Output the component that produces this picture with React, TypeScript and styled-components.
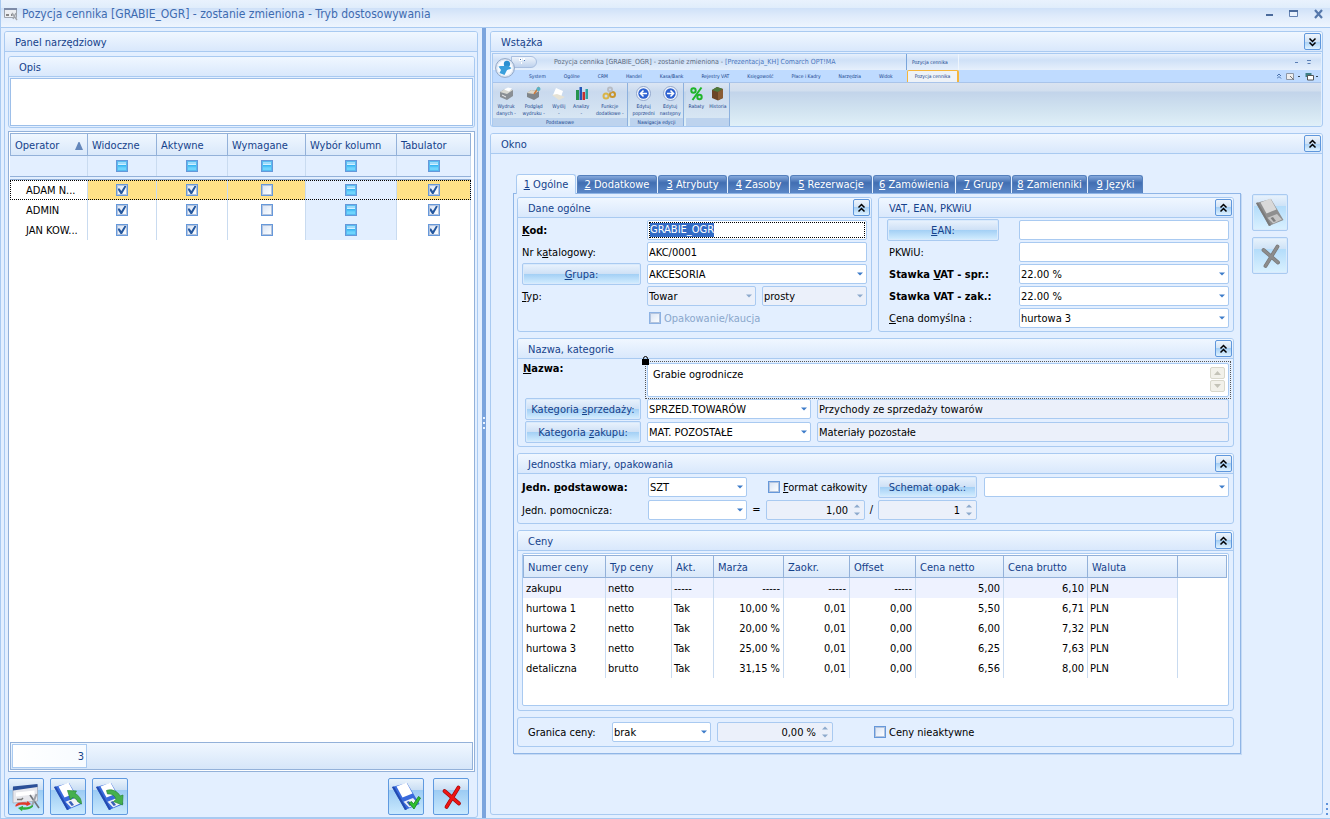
import React, { useEffect, useRef } from "react";
import styled, { createGlobalStyle, css } from "styled-components";

const c = {
  page: "#e3efff",
  line: "#a9caf1",
  gridLine: "#93b1d9",
  cellLine: "#c9dbf0",
  navy: "#15428b",
  readonly: "#ebf0fa",
  arrow: "#3d7cc9",
  arrowOff: "#8da9cc",
};

const Global = createGlobalStyle`
  * { box-sizing: border-box; }
  body { margin: 0; background: ${c.page}; }
  body, button, input, select, textarea {
    font-family: "DejaVu Sans Condensed", Tahoma, "DejaVu Sans", sans-serif;
    font-size: 11px;
    line-height: 14px;
    color: #000;
  }
  button, input, select, textarea { margin: 0; }
`;

/* ---------- window frame ---------- */

const Window = styled.div`
  display: flex;
  flex-direction: column;
  min-height: 100vh;
  border: solid ${c.line};
  border-width: 0 0 1px 1px;
`;

const TitleBar = styled.header`
  display: flex;
  align-items: center;
  height: 28px;
  padding: 0 7px 0 3px;
  border-bottom: 1px solid ${c.line};
  background: linear-gradient(#e9f2fd 0, #e0edfb 8px, #cfe1f8 8px, #dfebfb 16px, #eef5fe 27px);
`;

const Title = styled.h1`
  flex: 1;
  margin: 0 0 0 4px;
  font-size: 12px;
  line-height: 16px;
  font-weight: normal;
  color: #3e6bb0;
`;

const WindowButton = styled.button`
  display: flex;
  width: 25px;
  height: 16px;
  padding: 0;
  justify-content: flex-end;
  align-items: center;
  border: 0;
  background: none;
`;

const Columns = styled.main`
  display: grid;
  flex: 1;
  grid-template-columns: 474px 4px minmax(780px, 1fr);
  column-gap: 4px;
  padding: 0 7px 0 3px;
`;

const Splitter = styled.div`
  display: flex;
  align-items: center;
  justify-content: center;
  background: #7ba4dd;
`;

const Grip = styled.svg`
  width: 2px;
  height: 12px;
`;

const CornerGrip = styled.svg`
  position: absolute;
  right: 2px;
  bottom: 4px;
  width: 2px;
  height: 12px;
`;

const LeftPane = styled.div`
  display: flex;
  padding-top: 3px;
`;

const RightPane = styled.div`
  display: flex;
  flex-direction: column;
  gap: 6px;
  padding: 3px 0;
`;

/* ---------- group boxes ---------- */

const GroupBox = styled.section<{ $grow?: boolean }>`
  display: flex;
  flex-direction: column;
  min-width: 0;
  border: 1px solid ${c.line};
  border-radius: 3px;
  ${(p) => p.$grow && "flex: 1;"}
`;

const GroupHead = styled.div`
  display: flex;
  align-items: center;
  justify-content: space-between;
  height: 20px;
  padding: 0 1px 0 10px;
  border-bottom: 1px solid ${c.line};
  border-radius: 2px 2px 0 0;
  background: linear-gradient(#f0f7ff, #d9e8fc);
`;

const GroupTitle = styled.h2`
  margin: 0;
  padding-top: 2px;
  font-size: 11px;
  line-height: 14px;
  font-weight: normal;
  color: ${c.navy};
`;

const CollapseButton = styled.button`
  display: flex;
  width: 17px;
  height: 17px;
  padding: 0;
  align-items: center;
  justify-content: center;
  border: 1px solid #5f97dc;
  border-radius: 2px;
  background: linear-gradient(#eef5fc, #d0e2f5 50%, #a6cff4 50%, #dff2ff);
`;

function Group(props: { title: string; toggle?: "up" | "down"; grow?: boolean; children: React.ReactNode }) {
  return (
    <GroupBox $grow={props.grow}>
      <GroupHead>
        <GroupTitle>{props.title}</GroupTitle>
        {props.toggle && (
          <CollapseButton aria-label={(props.toggle === "up" ? "Zwiń " : "Rozwiń ") + props.title}>
            <svg width="9" height="10" viewBox="0 0 9 10" fill="none" stroke="#000" strokeWidth="1.5">
              {props.toggle === "up" ? (
                <path d="M1.500 4.500 4.500 1.500 7.500 4.500M1.500 8.500 4.500 5.500 7.500 8.500" />
              ) : (
                <path d="M1.500 1.500 4.500 4.500 7.500 1.500M1.500 5.500 4.500 8.500 7.500 5.500" />
              )}
            </svg>
          </CollapseButton>
        )}
      </GroupHead>
      {props.children}
    </GroupBox>
  );
}

/* ---------- form controls ---------- */

const Label = styled.label<{ $bold?: boolean; $inset?: boolean }>`
  height: 20px;
  padding-top: 1px;
  padding-left: ${(p) => (p.$inset ? 2 : 0)}px;
  line-height: 20px;
  white-space: nowrap;
  font-weight: ${(p) => (p.$bold ? "bold" : "normal")};
`;

const fieldBox = css`
  width: 100%;
  min-width: 0;
  height: 20px;
  border: 1px solid ${c.line};
  border-radius: 2px;
  outline: 0;
  color: #000;
`;

const TextInput = styled.input`
  ${fieldBox}
  padding: 0 1px;
  background: ${(p) => (p.readOnly ? c.readonly : "#fff")};
`;

const CodeFrame = styled.div`
  display: flex;
  height: 20px;
  padding: 1px;
  border: 1px solid ${c.line};
  border-radius: 2px;
  background: #fff;
`;

const CodeInput = styled.input`
  width: 100%;
  padding: 0;
  border: 1px dotted #000;
  outline: 0;
  background: #fff;
  &::selection {
    background: #316ac5;
    color: #fff;
  }
`;

const SelectWrap = styled.div`
  position: relative;
  display: flex;
  min-width: 0;
`;

const SelectBox = styled.select`
  ${fieldBox}
  appearance: none;
  padding: 1px 16px 0 1px;
  background: #fff;
  &:disabled {
    background: ${c.readonly};
    opacity: 1;
  }
`;

const SelectArrow = styled.svg`
  position: absolute;
  top: 8px;
  right: 4px;
  pointer-events: none;
`;

function Select(props: { id?: string; label?: string; value?: string; disabled?: boolean }) {
  return (
    <SelectWrap>
      <SelectBox id={props.id} aria-label={props.label} disabled={props.disabled}>
        <option>{props.value}</option>
      </SelectBox>
      <SelectArrow width="6" height="4" viewBox="0 0 6 4">
        <path d="M0 0.5H6L3 3.5Z" fill={props.disabled ? c.arrowOff : c.arrow} />
      </SelectArrow>
    </SelectWrap>
  );
}

const SpinWrap = styled.div`
  display: flex;
  min-width: 0;
  height: 20px;
  padding-right: 4px;
  align-items: center;
  border: 1px solid ${c.line};
  border-radius: 2px;
  background: ${c.readonly};
`;

const SpinInput = styled.input`
  flex: 1;
  min-width: 0;
  padding: 1px 0 0;
  border: 0;
  outline: 0;
  text-align: right;
  background: none;
`;

const SpinButtons = styled.div`
  display: flex;
  flex-direction: column;
  margin-left: 6px;
`;

const SpinButton = styled.button`
  display: flex;
  width: 6px;
  height: 8px;
  padding: 0;
  align-items: center;
  border: 0;
  background: none;
`;

function Spinner(props: { label: string; value: string }) {
  return (
    <SpinWrap>
      <SpinInput aria-label={props.label} defaultValue={props.value} readOnly />
      <SpinButtons>
        <SpinButton aria-label="Zwiększ">
          <svg width="6" height="4" viewBox="0 0 6 4">
            <path d="M0 3.5H6L3 0.5Z" fill="#8da9cc" />
          </svg>
        </SpinButton>
        <SpinButton aria-label="Zmniejsz">
          <svg width="6" height="4" viewBox="0 0 6 4">
            <path d="M0 0.5H6L3 3.5Z" fill="#8da9cc" />
          </svg>
        </SpinButton>
      </SpinButtons>
    </SpinWrap>
  );
}

const CheckBox = styled.input`
  appearance: none;
  display: grid;
  place-items: center;
  flex: none;
  width: 12px;
  height: 12px;
  border: 1px solid #6698da;
  background: #fff;
  &:disabled {
    border-color: #8db2e3;
  }
  &::before {
    content: "";
    grid-area: 1 / 1;
    width: 8px;
    height: 8px;
    border: 1px solid #b3c4de;
    background: linear-gradient(135deg, #dbe5f5, #fbfdff);
  }
  &:indeterminate::before {
    border-color: #58bcf0;
    background: linear-gradient(#9fdcfb 2px, #d5f1ff 2px, #d5f1ff 3px, #2fb0f2 3px, #6fd4fd 6px);
  }
  &:checked::after {
    content: "";
    grid-area: 1 / 1;
    width: 8px;
    height: 8px;
    background: #25589f;
    clip-path: polygon(0 30%, 20% 30%, 42% 62%, 80% 0, 100% 0, 100% 14%, 50% 100%, 32% 100%, 0 50%);
  }
`;

function Check(props: { id?: string; label?: string; state?: "on" | "off" | "mixed"; disabled?: boolean }) {
  const ref = useRef<HTMLInputElement>(null);
  useEffect(() => {
    if (ref.current) ref.current.indeterminate = props.state === "mixed";
  }, [props.state]);
  return (
    <CheckBox
      ref={ref}
      type="checkbox"
      id={props.id}
      aria-label={props.label}
      defaultChecked={props.state === "on"}
      disabled={props.disabled}
    />
  );
}

const CheckLine = styled.label<{ $muted?: boolean }>`
  display: flex;
  gap: 3px;
  height: 20px;
  padding-left: 2px;
  align-items: center;
  white-space: nowrap;
  color: ${(p) => (p.$muted ? "#8aa7cc" : "#000")};
`;

const CheckText = styled.span`
  padding-top: 1px;
`;

const PushButton = styled.button`
  height: 22px;
  margin: -1px 0;
  padding: 1px 2px 0;
  border: 1px solid ${c.line};
  border-radius: 2px;
  box-shadow: inset 0 0 0 1px #d9eafc;
  color: ${c.navy};
  white-space: nowrap;
  background: linear-gradient(#eaf3fd, #cfe1f6 48%, #a2cff5 50%, #d5eeff);
`;

/* ---------- tool panel ---------- */

const PanelBody = styled.div`
  display: flex;
  flex: 1;
  flex-direction: column;
  gap: 3px;
  padding: 4px 2px 2px 3px;
`;

const NoteArea = styled.textarea`
  display: block;
  height: 48px;
  margin: 1px;
  border: 1px solid #9dbfe9;
  outline: 0;
  resize: none;
  background: #fff;
`;

const OperatorGrid = styled.div`
  display: flex;
  flex: 1;
  flex-direction: column;
  justify-content: space-between;
  padding: 1px;
  border: 1px solid ${c.gridLine};
  background: #fff;
`;

const OperatorTable = styled.table`
  width: 461px;
  table-layout: fixed;
  border-spacing: 0;
`;

const HeadCell = styled.th`
  height: 23px;
  padding: 2px 4px 0;
  border: solid ${c.gridLine};
  border-width: 1px 1px 1px 0;
  text-align: left;
  font-weight: normal;
  white-space: nowrap;
  color: ${c.navy};
  background: linear-gradient(#f0f7ff, #d9e8fa);
  &:first-child {
    border-left-width: 1px;
  }
`;

const SortedHead = styled.span`
  display: flex;
  align-items: center;
  justify-content: space-between;
`;

const FilterCell = styled.td`
  height: 20px;
  padding: 0;
  border-right: 1px solid ${c.cellLine};
  background: ${c.page};
`;

const FilterEdge = styled.td`
  height: 4px;
  padding: 0;
  border: solid ${c.gridLine};
  border-width: 1px 0;
  background: ${c.page};
`;

const OperatorRow = styled.tr<{ $active?: boolean }>`
  ${(p) => p.$active && "outline: 1px dotted #000; outline-offset: -1px;"}
`;

const FlagCell = styled.td<{ $tone: "white" | "yellow" | "blue" }>`
  height: 20px;
  padding: 0;
  border-right: 1px solid ${c.cellLine};
  background: ${(p) => ({ white: "#fff", yellow: "#ffe187", blue: c.page })[p.$tone]};
`;

const NameCell = styled.td`
  height: 20px;
  padding: 1px 2px 0 16px;
  white-space: nowrap;
  border-right: 1px solid ${c.cellLine};
`;

const CenterCheck = styled.div`
  display: flex;
  justify-content: center;
`;

const GridFooter = styled.div`
  display: flex;
  height: 28px;
  padding: 1px;
  border: 1px solid ${c.gridLine};
  background: linear-gradient(#f0f7ff, #d6e6f9);
`;

const FooterCount = styled.output`
  width: 75px;
  padding: 0 2px;
  border: 1px solid ${c.line};
  line-height: 24px;
  text-align: right;
  color: ${c.navy};
  background: linear-gradient(90deg, #fff, #f7fbff);
`;

const ActionBar = styled.div`
  display: flex;
  gap: 6px;
  padding: 3px 6px 0 0;
`;

const IconButton = styled.button<{ $off?: boolean }>`
  display: flex;
  width: 36px;
  height: 37px;
  padding: 0;
  align-items: center;
  justify-content: center;
  border: 1px solid ${(p) => (p.$off ? c.line : "#5f9ae0")};
  border-radius: 2px;
  background: linear-gradient(#e9f3fc, #cbdff4 30%, #9ccbf3 31%, #c9e9fe);
  ${(p) => p.$off && "box-shadow: inset 0 0 0 1px #d9eafc; background: linear-gradient(#e9f3fc, #cfe3f7 30%, #b3dcfa 31%, #daf1ff);"}
`;

const Apart = styled.div`
  display: flex;
  gap: 9px;
  margin-left: auto;
`;

type FloppyMark = "out" | "in" | "ok" | "none";

function Floppy({ mark }: { mark: FloppyMark }) {
  const off = mark === "none";
  return (
    <svg width="30" height="31" viewBox="0 0 30 31">
      <path d="M1 6 L16 2 L28.500 23 L14 29 Z" fill={off ? "#8f8f8f" : "#3a6bdc"} />
      <path d="M1 6 L3 5.500 L16 28.200 L14 29 Z" fill={off ? "#7a7a7a" : "#234bb0"} />
      <path d="M5.500 5.600 L15.500 1.500 L21.500 12.500 L11.500 16.500 Z" fill={off ? "#d9d9d9" : "#fff"} />
      <path d="M12.500 20.800 L22 17 L27 22.600 L18.200 26.600 Z" fill={off ? "#c6c6c6" : "#f0f2f7"} />
      <path d="M15.500 21 L18 20 L21 24 L18.700 25 Z" fill={off ? "#808080" : "#3a5fb8"} />
      {mark === "out" && (
        <path d="M14.500 9.500 L23.500 10 L22 12.500 C26 14.500 28.500 18 28.500 23 L24.500 20.500 C24 18.500 22 17 19.500 16.500 L17.500 19 Z" fill="#45b04d" stroke="#2b8a37" strokeWidth=".7" />
      )}
      {mark === "in" && (
        <path d="M11.500 9.500 C17 7.500 23 10.500 25 15 L28 14 L27.500 24 L18.500 20.500 L21 18.500 C20 14.500 17 12.500 12.500 13 Z" fill="#45b04d" stroke="#2b8a37" strokeWidth=".7" />
      )}
      {mark === "ok" && (
        <path d="M18 22 L20.500 20.500 L22.500 23 L27.500 15.500 L29.500 17 L23 28 Z" fill="#2fc02f" stroke="#15801c" strokeWidth=".8" />
      )}
    </svg>
  );
}

function Cross({ off }: { off?: boolean }) {
  return (
    <svg width="26" height="28" viewBox="0 0 26 28" fill="none" strokeLinecap="round">
      <path d="M6.500 8 L21 20.500 M20.500 4.500 L8.500 24" stroke={off ? "#777" : "#a00808"} strokeWidth="3.800" />
      <path d="M6.500 8 L21 20.500 M20.500 4.500 L8.500 24" stroke={off ? "#8c8c8c" : "#ee1515"} strokeWidth="2.400" />
    </svg>
  );
}

function FormSwapIcon() {
  return (
    <svg width="28" height="30" viewBox="0 0 28 30">
      <path d="M1 5.500 L25.500 3 V19 L1 21 Z" fill="#e6e7ec" stroke="#a3a8b2" strokeWidth=".7" />
      <path d="M1 4.500 L25.500 2 V5 L1 8.500 Z" fill="#2b5098" />
      <path d="M4 10.500 L22.500 8.500 V12.500 L4 14.500 Z" fill="#fff" />
      <path d="M5 17.500h4M11 16l-2 2" stroke="#777" strokeWidth="1.500" />
      <path d="M18 13 L27 26" stroke="#6f7379" strokeWidth="1.600" />
      <path d="M24.500 12 L19.500 25" stroke="#9da1a8" strokeWidth="2" />
      <path d="M3.500 23 C5.500 20 10 20 15 20.500 L15.500 19 L19 22 L14.500 24.200 V23 C10 22.300 7 22.500 3.500 24.800 Z" fill="#e23a2a" />
      <path d="M21 24.500 C18.500 28 12.500 28 10.500 27.500 L10 29.200 L6 26 L11 23.800 V25.200 C15 25.500 18 24.800 21 23 Z" fill="#2fae3a" />
    </svg>
  );
}

function AppIcon() {
  return (
    <svg width="14" height="14" viewBox="0 0 14 14">
      <path d="M.5 1.500H12.500V10.500H.5Z" fill="#eceef2" stroke="#9da3ad" />
      <path d="M0 1H13V3H0Z" fill="#7d8ba8" />
      <path d="M2 8h3M7 8h1.500" stroke="#666" strokeWidth="1.300" />
      <path d="M8 6l5 7M12 6l-3 6" stroke="#a3a6ac" strokeWidth="1.400" />
    </svg>
  );
}

/* ---------- operator table data ---------- */

type Flag = "on" | "off" | "mixed";
const flagColumns = ["Widoczne", "Aktywne", "Wymagane", "Wybór kolumn", "Tabulator"];
const operatorWidths = [78, 69, 71, 78, 91, 74];
const operators: { name: string; flags: Flag[] }[] = [
  { name: "ADAM N...", flags: ["on", "on", "off", "mixed", "on"] },
  { name: "ADMIN", flags: ["on", "on", "off", "mixed", "on"] },
  { name: "JAN KOW...", flags: ["on", "on", "off", "mixed", "on"] },
];

function ToolPanel() {
  return (
    <Group title="Panel narzędziowy" grow>
      <PanelBody>
        <Group title="Opis">
          <NoteArea aria-label="Opis" />
        </Group>
        <OperatorGrid>
          <OperatorTable>
            <colgroup>
              {operatorWidths.map((w, i) => (
                <col key={i} width={w} />
              ))}
            </colgroup>
            <thead>
              <tr>
                <HeadCell>
                  <SortedHead>
                    Operator
                    <svg width="8" height="8" viewBox="0 0 8 8">
                      <path d="M0 8H8L4.500 0H3.500Z" fill="#6487bb" />
                    </svg>
                  </SortedHead>
                </HeadCell>
                {flagColumns.map((f) => (
                  <HeadCell key={f}>{f}</HeadCell>
                ))}
              </tr>
            </thead>
            <tbody>
              <tr>
                <FilterCell />
                {flagColumns.map((f) => (
                  <FilterCell key={f}>
                    <CenterCheck>
                      <Check label={"Filtr: " + f} state="mixed" />
                    </CenterCheck>
                  </FilterCell>
                ))}
              </tr>
              <tr>
                <FilterEdge colSpan={6} />
              </tr>
              {operators.map((o, r) => (
                <OperatorRow key={o.name} $active={r === 0}>
                  <NameCell>{o.name}</NameCell>
                  {o.flags.map((state, i) => (
                    <FlagCell key={i} $tone={i === 3 ? "blue" : r === 0 ? "yellow" : "white"}>
                      <CenterCheck>
                        <Check label={o.name + ": " + flagColumns[i]} state={state} />
                      </CenterCheck>
                    </FlagCell>
                  ))}
                </OperatorRow>
              ))}
            </tbody>
          </OperatorTable>
          <GridFooter>
            <FooterCount>3</FooterCount>
          </GridFooter>
        </OperatorGrid>
        <ActionBar>
          <IconButton aria-label="Przywróć układ">
            <FormSwapIcon />
          </IconButton>
          <IconButton aria-label="Eksportuj">
            <Floppy mark="out" />
          </IconButton>
          <IconButton aria-label="Importuj">
            <Floppy mark="in" />
          </IconButton>
          <Apart>
            <IconButton aria-label="Zapisz">
              <Floppy mark="ok" />
            </IconButton>
            <IconButton aria-label="Anuluj">
              <Cross />
            </IconButton>
          </Apart>
        </ActionBar>
      </PanelBody>
    </Group>
  );
}

/* ---------- ribbon thumbnail ---------- */

const Ribbon = styled.div`
  position: relative;
  margin: 1px 1px 0;
  border: solid ${c.line};
  border-width: 1px 0 0 1px;
  color: ${c.navy};
  font-size: 7px;
  line-height: 8px;
  white-space: nowrap;
`;

const RibbonTitle = styled.div`
  display: grid;
  grid-template-columns: 413px 53px 1fr;
  height: 16px;
  align-items: center;
  background: linear-gradient(#e6f0fc, #cfe1f7 6px, #e6f0fc);
`;

const RibbonCaption = styled.span`
  padding-left: 61px;
  color: #5d6b80;
  em {
    font-style: normal;
    color: #4a76bd;
  }
`;

const ContextCaption = styled.span`
  padding-left: 5px;
  font-size: 5px;
  line-height: 16px;
  border-left: 1px solid #7aa5db;
  border-right: 1px solid #eef5fd;
`;

const RibbonWindow = styled.span`
  display: flex;
  padding-right: 6px;
  justify-content: flex-end;
`;

const QuickAccess = styled.span`
  position: absolute;
  top: 2px;
  left: 18px;
  width: 26px;
  height: 12px;
  border: 1px solid #a9bfe0;
  border-radius: 0 6px 6px 0;
  background: linear-gradient(#eef4fc, #bfd2ed);
`;

const QuickIcon = styled.svg`
  display: block;
  margin: 1px 0 0 5px;
`;

const Orb = styled.svg`
  position: absolute;
  top: 4px;
  left: 2px;
`;

const RibbonTabs = styled.nav`
  display: flex;
  height: 13px;
  padding-left: 36px;
  gap: 18px;
  align-items: center;
  border-bottom: 1px solid #a9c4ea;
  background: #bfdbff;
`;

const RibbonTab = styled.a`
  font-size: 5px;
  color: ${c.navy};
  text-decoration: none;
`;

const ContextSlot = styled.div`
  position: absolute;
  top: 16px;
  left: 414px;
`;

const ContextTab = styled(RibbonTab)`
  display: block;
  width: 52px;
  height: 12px;
  line-height: 11px;
  text-align: center;
  border: solid #f5b63c;
  border-width: 1px 2px 0 1px;
  border-radius: 2px 2px 0 0;
  background: #eef2f7;
`;

const RibbonTools = styled.span`
  display: flex;
  margin-left: auto;
  padding-right: 2px;
  align-items: center;
`;

const RibbonBand = styled.div`
  display: flex;
  gap: 2px;
  height: 43px;
  background: linear-gradient(#dae3f0, #d1deee 8px, #c2d4ea 9px, #d0e2f0 26px, #e0f0f8);
`;

const RibbonGroup = styled.div<{ $width: number }>`
  display: flex;
  flex-direction: column;
  width: ${(p) => p.$width}px;
  justify-content: space-between;
  border-right: 1px solid #8db1de;
  text-align: center;
  background: linear-gradient(#dce6f3, #c9d9ee 9px, #dceaf5);
`;

const RibbonButtons = styled.div`
  display: flex;
  justify-content: space-around;
  padding: 3px 0 0;
`;

const RibbonButton = styled.button`
  display: flex;
  flex-direction: column;
  padding: 0;
  align-items: center;
  border: 0;
  background: none;
  font-size: 5px;
  line-height: 7px;
  color: ${c.navy};
`;

const RibbonIcon = styled.svg`
  width: 15px;
  height: 15px;
  margin-bottom: 2px;
`;

const RibbonGroupName = styled.span`
  height: 8px;
  font-size: 5px;
  line-height: 8px;
  background: #bdd3ee;
`;

const ribbonIcons: Record<string, React.ReactNode> = {
  print: (
    <>
      <path d="M1 6 6 3l8 1v6l-6 4-7-3z" fill="#8a8f94" />
      <path d="M1 6 6 3l8 1-6 4z" fill="#d9d9d2" />
      <path d="M5 3.500 9 1.500l4 1-3 3z" fill="#fff" />
      <path d="m3 9 4 2" stroke="#eee" />
    </>
  ),
  preview: (
    <>
      <path d="M1 7 5 4l8 1v6l-5 3-7-3z" fill="#7f858a" />
      <path d="M1 7 5 4l8 1-5 3z" fill="#ddd9cc" />
      <path d="m13 1-5 7" stroke="#c9793a" strokeWidth="1.500" />
      <circle cx="12.500" cy="3" r="2" fill="#59b3c8" />
    </>
  ),
  mail: (
    <>
      <path d="m5 2 7 3-2 6-8-2z" fill="#fff" />
      <path d="m1 9 5-1 8 3-6 3z" fill="#e6e2d4" />
    </>
  ),
  chart: (
    <>
      <path d="M2 4h3v10H2z" fill="#26944e" />
      <path d="M5.500 1H8v13H5.500z" fill="#2456b8" />
      <path d="M8.500 6H11v8H8.500z" fill="#c83030" />
      <path d="M11.500 3H14v10h-2.500z" fill="#2fa4a0" />
    </>
  ),
  gears: (
    <g fill="none" strokeWidth="2">
      <circle cx="4" cy="10" r="2.500" stroke="#d9b54a" />
      <circle cx="10.500" cy="8.500" r="2.500" stroke="#c9952c" />
      <circle cx="8" cy="3.500" r="2" stroke="#b7bcc4" />
    </g>
  ),
  back: (
    <>
      <circle cx="7.500" cy="7.500" r="7" fill="#f4f7fc" stroke="#8fa5cb" />
      <circle cx="7.500" cy="7.500" r="5.200" fill="#2f62d0" />
      <path d="M11 7.500H5M7.500 4.500l-3 3 3 3" stroke="#fff" strokeWidth="1.600" fill="none" />
    </>
  ),
  next: (
    <>
      <circle cx="7.500" cy="7.500" r="7" fill="#f4f7fc" stroke="#8fa5cb" />
      <circle cx="7.500" cy="7.500" r="5.200" fill="#2f62d0" />
      <path d="M4 7.500h6M7.500 4.500l3 3-3 3" stroke="#fff" strokeWidth="1.600" fill="none" />
    </>
  ),
  percent: (
    <g fill="none" stroke="#1fb52a" strokeWidth="2">
      <circle cx="4.500" cy="4.500" r="2.200" />
      <circle cx="10.500" cy="11" r="2.200" />
      <path d="m12.500 1.500-9 12.500" />
    </g>
  ),
  box: (
    <>
      <path d="m2 4 5-3 6 2v9l-5 2.500L2 12z" fill="#6b4526" />
      <path d="m2 4 5-3 6 2-5 3z" fill="#4e7a3c" />
      <path d="M8 6v8l5-2V3z" fill="#8a5c35" />
    </>
  ),
};

const ribbonGroups = [
  {
    name: "Podstawowe",
    width: 135,
    items: [
      ["print", "Wydruk", "danych -"],
      ["preview", "Podgląd", "wydruku -"],
      ["mail", "Wyślij", "-"],
      ["chart", "Analizy", "-"],
      ["gears", "Funkcje", "dodatkowe -"],
    ],
  },
  {
    name: "Nawigacja edycji",
    width: 54,
    items: [
      ["back", "Edytuj", "poprzedni"],
      ["next", "Edytuj", "następny"],
    ],
  },
  {
    name: "",
    width: 44,
    items: [
      ["percent", "Rabaty", ""],
      ["box", "Historia", ""],
    ],
  },
];

const ribbonTabs = ["System", "Ogólne", "CRM", "Handel", "Kasa/Bank", "Rejestry VAT", "Księgowość", "Płace i Kadry", "Narzędzia", "Widok"];

function RibbonPreview() {
  return (
    <Ribbon>
      <RibbonTitle>
        <RibbonCaption>
          Pozycja cennika [GRABIE_OGR] - zostanie zmieniona - <em>[Prezentacja_KH] Comarch OPT!MA</em>
        </RibbonCaption>
        <ContextCaption>Pozycja cennika</ContextCaption>
        <RibbonWindow>
          <svg width="20" height="6" viewBox="0 0 20 6" fill="none" stroke="#5a7eb4">
            <path d="M0 3.500h3M12 1.500h4M12.500 4.500h3" />
          </svg>
        </RibbonWindow>
      </RibbonTitle>
      <RibbonTabs>
        {ribbonTabs.map((t) => (
          <RibbonTab key={t} href="#">
            {t}
          </RibbonTab>
        ))}
        <RibbonTools>
          <svg width="42" height="9" viewBox="0 0 42 9" fill="none">
            <path d="m0 4 2-2 2 2M0 6.500l2-2 2 2" stroke="#4a72ad" />
            <path d="M9.500 1.500h7v6h-7z" fill="#eee" stroke="#8d97a6" />
            <path d="m13 4 4 4" stroke="#777" />
            <path d="M21 4.500h2M39 4.500h2" stroke="#345" />
            <path d="M28.500 1h6v4h-6z" fill="#3f7f86" />
            <path d="M30.500 3.500h6v4.500h-6z" fill="#fff" stroke="#555" />
          </svg>
        </RibbonTools>
      </RibbonTabs>
      <RibbonBand>
        {ribbonGroups.map((g, i) => (
          <RibbonGroup key={i} $width={g.width}>
            <RibbonButtons>
              {g.items.map(([icon, a, b]) => (
                <RibbonButton key={a + b}>
                  <RibbonIcon viewBox="0 0 15 15">{ribbonIcons[icon]}</RibbonIcon>
                  <span>{a}</span>
                  <span>{b}</span>
                </RibbonButton>
              ))}
            </RibbonButtons>
            <RibbonGroupName>{g.name}</RibbonGroupName>
          </RibbonGroup>
        ))}
      </RibbonBand>
      <QuickAccess>
        <QuickIcon width="10" height="8" viewBox="0 0 10 8">
          <path d="M2 0h3v3H2zM4 4h1v2H4zM6 0h2v2H6z" fill="#fff" />
          <path d="M3 1h1v1H3zM7 2h1v1H7z" fill="#4a72ad" />
        </QuickIcon>
      </QuickAccess>
      <Orb width="20" height="20" viewBox="0 0 20 20">
        <circle cx="10" cy="10" r="9.400" fill="#dfe8f4" stroke="#8ea5c6" />
        <circle cx="10" cy="10" r="7.500" fill="#f8fbff" />
        <circle cx="12" cy="6" r="3.200" fill="#2b8fd0" />
        <path d="M3.500 8.500c3-1 6 0 9-1l4 2.500c-2 2-4 1-5 3l-2 4-5-2 1.500-3z" fill="#3a9fdc" />
      </Orb>
      <ContextSlot>
        <ContextTab href="#">Pozycja cennika</ContextTab>
      </ContextSlot>
    </Ribbon>
  );
}

/* ---------- item form ---------- */

const FormArea = styled.div`
  display: flex;
  gap: 11px;
  padding: 20px 34px 60px 22px;
`;

const TabSheet = styled.div`
  flex: 1;
  min-width: 0;
`;

const TabStrip = styled.div`
  display: flex;
  gap: 1px;
  height: 19px;
  padding-left: 3px;
  align-items: flex-end;
`;

const Tab = styled.button<{ $width: number; $active?: boolean }>`
  width: ${(p) => p.$width}px;
  height: 18px;
  padding: 1px 0 0;
  border: 1px solid #5580bd;
  border-bottom: 0;
  border-radius: 3px 3px 0 0;
  white-space: nowrap;
  color: #fff;
  background: linear-gradient(#86a9dc, #416eb2 40%, #5b88c8);
  ${(p) =>
    p.$active &&
    css`
      position: relative;
      height: 20px;
      margin-bottom: -1px;
      border-color: ${c.line};
      color: ${c.navy};
      background: linear-gradient(#fafdff, ${c.page});
    `}
`;

const TabPage = styled.div`
  display: flex;
  flex-direction: column;
  gap: 6px;
  padding: 3px 6px 6px 3px;
  border: 1px solid #8fb5e6;
  box-shadow: 1px 1px 0 #c5daf5;
`;

const TwoGroups = styled.div`
  display: grid;
  grid-template-columns: 355fr 356fr;
  gap: 6px;
`;

const FieldGrid = styled.div<{ $cols: string; $pad: string; $gapX: number }>`
  display: grid;
  grid-template-columns: ${(p) => p.$cols};
  gap: 2px ${(p) => p.$gapX}px;
  padding: ${(p) => p.$pad};
`;

const KindRow = styled.div`
  display: grid;
  grid-template-columns: 109px 1fr;
  gap: 6px;
`;

const NameBody = styled.div`
  display: grid;
  grid-template-columns: 118px minmax(0, 1fr);
  column-gap: 4px;
  padding: 2px 2px 0 5px;
`;

const NameLabel = styled(Label)`
  line-height: 14px;
`;

const NameFrame = styled.div`
  position: relative;
  height: 38px;
  padding: 1px;
  border: 1px dotted #555;
`;

const NameArea = styled.textarea`
  display: block;
  width: 100%;
  height: 34px;
  padding: 4px 24px 0 5px;
  border: 1px solid ${c.line};
  border-radius: 2px;
  outline: 0;
  resize: none;
  overflow: hidden;
  background: #fff;
`;

const LockMark = styled.svg`
  position: absolute;
  top: -6px;
  left: -4px;
`;

const ScrollButtons = styled.div`
  position: absolute;
  top: 5px;
  right: 5px;
  display: grid;
  gap: 1px;
`;

const ScrollButton = styled.button`
  display: grid;
  place-items: center;
  width: 15px;
  height: 12px;
  padding: 0;
  border: 1px solid #d9d8cc;
  border-radius: 2px;
  background: #f2f1ea;
`;

const CategoryBody = styled.div`
  display: grid;
  grid-template-columns: 116px 164px minmax(0, 1fr);
  gap: 3px 6px;
  padding: 0 4px 4px 7px;
`;

const UnitBody = styled.div`
  display: grid;
  grid-template-columns: 126px 99px 19px 99px 13px 99px 7px minmax(0, 1fr);
  row-gap: 3px;
  padding: 3px 4px;
`;

const Sign = styled.span`
  line-height: 20px;
  text-align: center;
`;

const UnitCheck = styled.div`
  grid-column: 4 / 6;
`;

const SchemeField = styled.div`
  grid-column: 8;
`;

const PriceFrame = styled.div`
  min-height: 153px;
  margin: 2px 4px 4px;
  padding: 1px 1px 0 0;
  border: 1px solid ${c.line};
  border-radius: 2px;
  background: #fff;
`;

const PriceTable = styled.table`
  width: 100%;
  table-layout: fixed;
  border-spacing: 0;
`;

const PriceCell = styled.td<{ $right?: boolean; $first?: boolean; $shade?: boolean }>`
  height: 20px;
  padding: 1px 3px 0 ${(p) => (p.$first ? 3 : 2)}px;
  border-right: 1px solid ${c.cellLine};
  text-align: ${(p) => (p.$right ? "right" : "left")};
  white-space: nowrap;
  background: ${(p) => (p.$shade ? "#eef2ff" : "#fff")};
`;

const LimitBox = styled(GroupBox)`
  flex-direction: row;
  align-items: center;
  padding: 4px 10px;
`;

const LimitLabel = styled(Label)`
  width: 84px;
`;

const LimitSelect = styled.div`
  width: 99px;
  margin-right: 6px;
`;

const LimitSpin = styled.div`
  width: 116px;
  margin-right: 39px;
`;

const SideButtons = styled.div`
  display: flex;
  flex-direction: column;
  gap: 6px;
  padding-top: 20px;
`;

const tabs: [string, string, number][] = [
  ["1", " Ogólne", 60],
  ["2", " Dodatkowe", 80],
  ["3", " Atrybuty", 69],
  ["4", " Zasoby", 61],
  ["5", " Rezerwacje", 82],
  ["6", " Zamówienia", 82],
  ["7", " Grupy", 55],
  ["8", " Zamienniki", 75],
  ["9", " Języki", 55],
];

const priceHeads = ["Numer ceny", "Typ ceny", "Akt.", "Marża", "Zaokr.", "Offset", "Cena netto", "Cena brutto", "Waluta"];
const priceWidths = [83, 66, 42, 70, 66, 66, 88, 84, 90];
const prices = [
  ["zakupu", "netto", "-----", "-----", "-----", "-----", "5,00", "6,10", "PLN"],
  ["hurtowa 1", "netto", "Tak", "10,00 %", "0,01", "0,00", "5,50", "6,71", "PLN"],
  ["hurtowa 2", "netto", "Tak", "20,00 %", "0,01", "0,00", "6,00", "7,32", "PLN"],
  ["hurtowa 3", "netto", "Tak", "25,00 %", "0,01", "0,00", "6,25", "7,63", "PLN"],
  ["detaliczna", "brutto", "Tak", "31,15 %", "0,01", "0,00", "6,56", "8,00", "PLN"],
];

function ItemForm() {
  const code = useRef<HTMLInputElement>(null);
  useEffect(() => {
    code.current?.focus();
    code.current?.select();
  }, []);

  return (
    <TabPage>
      <TwoGroups>
        <Group title="Dane ogólne" toggle="up">
          <FieldGrid $cols="119px minmax(0, 1fr)" $pad="2px 4px 3px 4px" $gapX={6}>
            <Label htmlFor="kod" $bold>
              <u>K</u>od:
            </Label>
            <CodeFrame>
              <CodeInput id="kod" ref={code} defaultValue="GRABIE_OGR" />
            </CodeFrame>
            <Label htmlFor="nrkat">
              Nr k<u>a</u>talogowy:
            </Label>
            <TextInput id="nrkat" defaultValue="AKC/0001" />
            <PushButton>
              <u>G</u>rupa:
            </PushButton>
            <Select label="Grupa" value="AKCESORIA" />
            <Label htmlFor="typ">
              <u>T</u>yp:
            </Label>
            <KindRow>
              <Select id="typ" value="Towar" disabled />
              <Select label="Rodzaj" value="prosty" disabled />
            </KindRow>
            <span />
            <CheckLine $muted>
              <Check disabled />
              <CheckText>Opakowanie/kaucja</CheckText>
            </CheckLine>
          </FieldGrid>
        </Group>
        <Group title="VAT, EAN, PKWiU" toggle="up">
          <FieldGrid $cols="112px minmax(0, 1fr)" $pad="2px 4px 3px 8px" $gapX={20}>
            <PushButton>
              <u>E</u>AN:
            </PushButton>
            <TextInput aria-label="EAN" />
            <Label htmlFor="pkwiu" $inset>
              PKWiU:
            </Label>
            <TextInput id="pkwiu" />
            <Label htmlFor="vats" $bold $inset>
              Stawka <u>V</u>AT - spr.:
            </Label>
            <Select id="vats" value="22.00 %" />
            <Label htmlFor="vatz" $bold $inset>
              Stawka VAT - zak.:
            </Label>
            <Select id="vatz" value="22.00 %" />
            <Label htmlFor="cenad" $inset>
              <u>C</u>ena domyślna :
            </Label>
            <Select id="cenad" value="hurtowa 3" />
          </FieldGrid>
        </Group>
      </TwoGroups>

      <Group title="Nazwa, kategorie" toggle="up">
        <NameBody>
          <NameLabel htmlFor="nazwa" $bold>
            <u>N</u>azwa:
          </NameLabel>
          <NameFrame>
            <NameArea id="nazwa" defaultValue="Grabie ogrodnicze" />
            <LockMark width="7" height="9" viewBox="0 0 7 9">
              <path d="M1.500 4V2.500a2 2 0 0 1 4 0V4" fill="none" stroke="#000" />
              <path d="M0 3h7v6H0z" />
            </LockMark>
            <ScrollButtons>
              <ScrollButton aria-label="W górę">
                <svg width="7" height="4" viewBox="0 0 7 4">
                  <path d="M0 4h7L3.500 0z" fill="#c4c3b8" />
                </svg>
              </ScrollButton>
              <ScrollButton aria-label="W dół">
                <svg width="7" height="4" viewBox="0 0 7 4">
                  <path d="M0 0h7L3.500 4z" fill="#c4c3b8" />
                </svg>
              </ScrollButton>
            </ScrollButtons>
          </NameFrame>
        </NameBody>
        <CategoryBody>
          <PushButton>
            Kategoria <u>s</u>przedaży:
          </PushButton>
          <Select label="Kategoria sprzedaży" value="SPRZED.TOWARÓW" />
          <TextInput aria-label="Opis kategorii sprzedaży" defaultValue="Przychody ze sprzedaży towarów" readOnly />
          <PushButton>
            Kategoria <u>z</u>akupu:
          </PushButton>
          <Select label="Kategoria zakupu" value="MAT. POZOSTAŁE" />
          <TextInput aria-label="Opis kategorii zakupu" defaultValue="Materiały pozostałe" readOnly />
        </CategoryBody>
      </Group>

      <Group title="Jednostka miary, opakowania" toggle="up">
        <UnitBody>
          <Label htmlFor="jedn" $bold>
            Jedn. <u>p</u>odstawowa:
          </Label>
          <Select id="jedn" value="SZT" />
          <span />
          <UnitCheck>
            <CheckLine>
              <Check />
              <CheckText>
                <u>F</u>ormat całkowity
              </CheckText>
            </CheckLine>
          </UnitCheck>
          <PushButton>Schemat opak.:</PushButton>
          <SchemeField>
            <Select label="Schemat opakowań" />
          </SchemeField>
          <Label htmlFor="jednp">Jedn. pomocnicza:</Label>
          <Select id="jednp" />
          <Sign>=</Sign>
          <Spinner label="Licznik" value="1,00" />
          <Sign>/</Sign>
          <Spinner label="Mianownik" value="1" />
        </UnitBody>
      </Group>

      <Group title="Ceny" toggle="up">
        <PriceFrame>
          <PriceTable>
            <colgroup>
              {priceWidths.map((w, i) => (
                <col key={i} width={w} />
              ))}
              <col />
            </colgroup>
            <thead>
              <tr>
                {priceHeads.map((h) => (
                  <HeadCell key={h}>{h}</HeadCell>
                ))}
                <HeadCell />
              </tr>
            </thead>
            <tbody>
              {prices.map((row, r) => (
                <tr key={r}>
                  {row.map((v, i) => (
                    <PriceCell key={i} $first={i === 0} $right={i > 2 && i < 8} $shade={r === 0}>
                      {v}
                    </PriceCell>
                  ))}
                  <td />
                </tr>
              ))}
            </tbody>
          </PriceTable>
        </PriceFrame>
      </Group>

      <LimitBox>
        <LimitLabel htmlFor="granica">Granica ceny:</LimitLabel>
        <LimitSelect>
          <Select id="granica" value="brak" />
        </LimitSelect>
        <LimitSpin>
          <Spinner label="Granica procentowa" value="0,00 %" />
        </LimitSpin>
        <CheckLine>
          <Check />
          <CheckText>Ceny nieaktywne</CheckText>
        </CheckLine>
      </LimitBox>
    </TabPage>
  );
}

export default function App() {
  return (
    <>
      <Global />
      <Window>
        <TitleBar>
          <AppIcon />
          <Title>Pozycja cennika [GRABIE_OGR] - zostanie zmieniona - Tryb dostosowywania</Title>
          <WindowButton aria-label="Minimalizuj">
            <svg width="7" height="10" viewBox="0 0 7 10">
              <path d="M0 5h7v2H0z" fill="#4b6b9c" />
            </svg>
          </WindowButton>
          <WindowButton aria-label="Maksymalizuj">
            <svg width="9" height="10" viewBox="0 0 9 10">
              <path d="M.5 1.500h8v6h-8z" fill="#eaf2fd" stroke="#6583b3" />
              <path d="M0 1h9v2H0z" fill="#4b6b9c" />
            </svg>
          </WindowButton>
          <WindowButton aria-label="Zamknij">
            <svg width="9" height="10" viewBox="0 0 9 10">
              <path d="m1 1 7 8M8 1 1 9" stroke="#5577aa" strokeWidth="2.200" />
            </svg>
          </WindowButton>
        </TitleBar>
        <Columns>
          <LeftPane>
            <ToolPanel />
          </LeftPane>
          <Splitter>
            <Grip viewBox="0 0 2 12" fill="#eaf3ff">
              <path d="M0 0h2v2H0zM0 5h2v2H0zM0 10h2v2H0z" />
            </Grip>
          </Splitter>
          <RightPane>
            <Group title="Wstążka" toggle="down">
              <RibbonPreview />
            </Group>
            <Group title="Okno" toggle="up" grow>
              <FormArea>
                <TabSheet>
                  <TabStrip>
                    {tabs.map(([key, name, width], i) => (
                      <Tab key={key} $width={width} $active={i === 0}>
                        <u>{key}</u>
                        {name}
                      </Tab>
                    ))}
                  </TabStrip>
                  <ItemForm />
                </TabSheet>
                <SideButtons>
                  <IconButton aria-label="Zapisz pozycję" $off>
                    <Floppy mark="none" />
                  </IconButton>
                  <IconButton aria-label="Zamknij pozycję" $off>
                    <Cross off />
                  </IconButton>
                </SideButtons>
              </FormArea>
            </Group>
          </RightPane>
        </Columns>
        <CornerGrip viewBox="0 0 2 12" fill="#5f93dc">
          <path d="M0 0h2v2H0zM0 5h2v2H0zM0 10h2v2H0z" />
        </CornerGrip>
      </Window>
    </>
  );
}
